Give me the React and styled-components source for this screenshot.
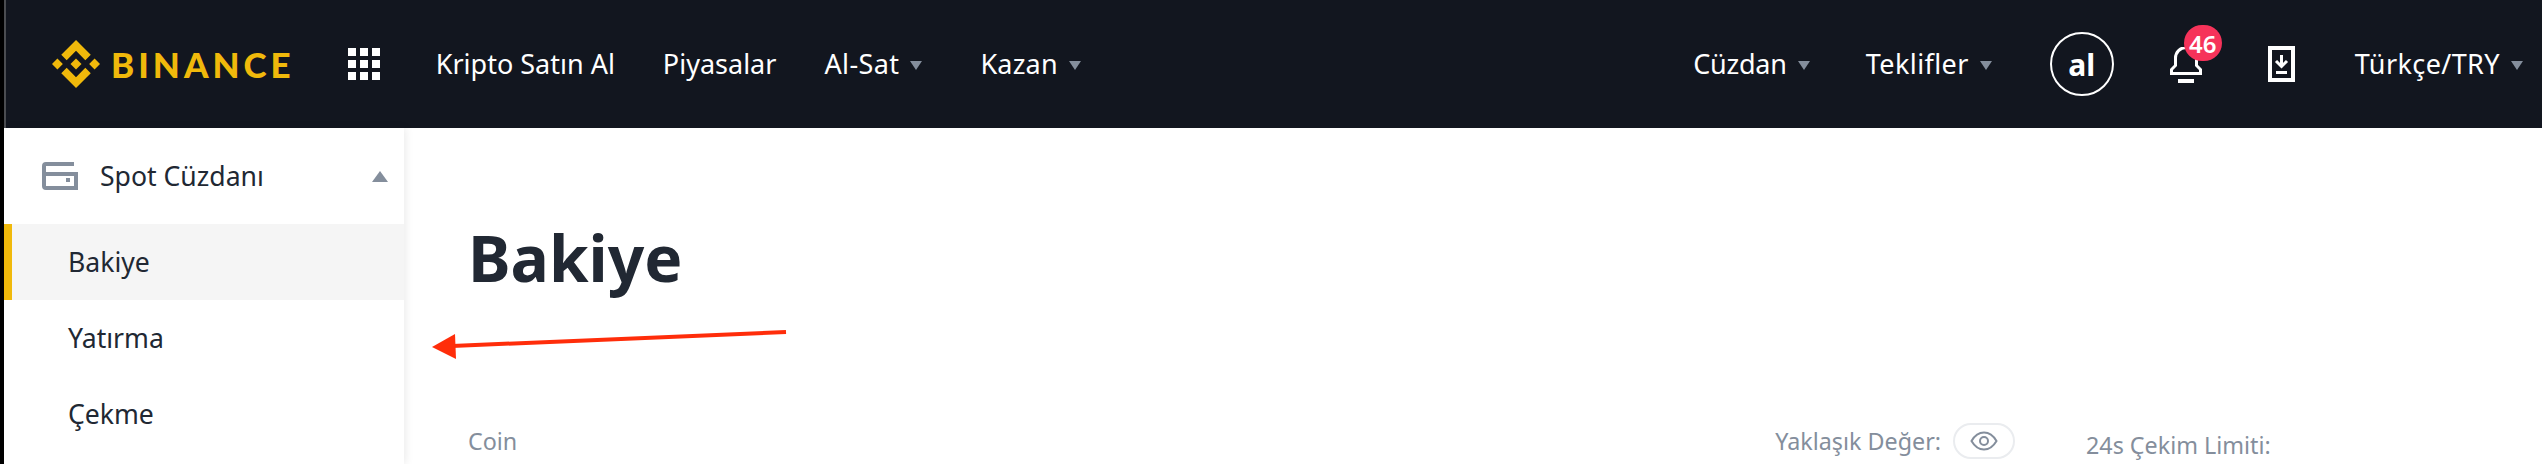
import React from "react";
import styled, { createGlobalStyle } from "styled-components";

const Global = createGlobalStyle`
  html, body {
    margin: 0;
    padding: 0;
    background: #fff;
    overflow: hidden;
  }
  body {
    font-family: "Noto Sans", "Liberation Sans", sans-serif;
  }
`;

const Page = styled.div`
  position: relative;
  width: 2542px;
  height: 464px;
  overflow: hidden;
  display: flex;
  flex-direction: column;
  background: #fff;
  border-left: 4px solid #000;
  box-sizing: border-box;
`;

const Header = styled.header`
  height: 128px;
  flex-shrink: 0;
  box-sizing: border-box;
  display: flex;
  align-items: center;
  justify-content: space-between;
  background: #12161f;
  border-left: 2px solid #4a4c50;
  padding: 0 19px 0 46px;
`;

const HeaderGroup = styled.div`
  display: flex;
  align-items: center;
`;

const Logo = styled.div`
  display: flex;
  align-items: center;
  gap: 11px;
  color: #f0b90b;
  font-family: Lato, sans-serif;
  font-weight: 900;
  font-size: 35px;
  letter-spacing: 4px;
`;

const AppsGrid = styled.div`
  display: grid;
  grid-template-columns: repeat(3, 8px);
  grid-auto-rows: 8px;
  gap: 4px;
  margin-left: 53px;
  i {
    background: #fff;
  }
`;

const NavItem = styled.div`
  display: flex;
  align-items: center;
  gap: 11px;
  color: #fff;
  font-size: 27px;
  line-height: 32px;
  white-space: nowrap;
  margin-left: ${(p) => p.$gap}px;
  letter-spacing: ${(p) => p.$track || 0}px;
`;

const Caret = styled.span`
  width: 0;
  height: 0;
  border-left: 6px solid transparent;
  border-right: 6px solid transparent;
  border-top: 9px solid #848e9c;
  margin-top: 2px;
`;

const Avatar = styled.div`
  width: 64px;
  height: 64px;
  box-sizing: border-box;
  border: 2px solid #fff;
  border-radius: 50%;
  color: #fff;
  font-size: 30px;
  font-weight: 700;
  display: flex;
  align-items: center;
  justify-content: center;
  margin-left: 58px;
`;

const BellWrap = styled.div`
  position: relative;
  width: 32px;
  height: 36px;
  margin-left: 56px;
  margin-top: 2px;
`;

const Badge = styled.span`
  position: absolute;
  left: 14px;
  top: -22px;
  width: 38px;
  height: 36px;
  border-radius: 18px;
  background: #f6335a;
  color: #fff;
  font-size: 24px;
  font-weight: 600;
  display: flex;
  align-items: center;
  justify-content: center;
`;

const DownloadIcon = styled.svg`
  width: 27px;
  height: 36px;
  margin-left: 66px;
`;

const Body = styled.div`
  flex: 1;
  display: flex;
  min-height: 0;
`;

const Sidebar = styled.aside`
  width: 400px;
  flex-shrink: 0;
  background: #fff;
  box-shadow: 2px 0 8px rgba(0, 0, 0, 0.08);
`;

const SideHead = styled.div`
  height: 96px;
  box-sizing: border-box;
  display: flex;
  align-items: center;
  padding: 0 16px 0 38px;
  color: #212833;
  font-size: 26.6px;
`;

const HeadLabel = styled.span`
  margin-left: 22px;
  flex: 1;
`;

const CaretUp = styled.span`
  width: 0;
  height: 0;
  border-left: 8px solid transparent;
  border-right: 8px solid transparent;
  border-bottom: 11px solid #848e9c;
`;

const SideItem = styled.div`
  height: 76px;
  box-sizing: border-box;
  display: flex;
  align-items: center;
  padding-left: ${(p) => (p.$active ? 56 : 64)}px;
  font-size: 26.6px;
  color: #212833;
  background: ${(p) => (p.$active ? "#f5f5f5" : "#fff")};
  border-left: ${(p) => (p.$active ? "8px solid #f0b90b" : "0")};
`;

const Main = styled.main`
  flex: 1;
  min-width: 0;
  padding-left: 64px;
`;

const Title = styled.h1`
  margin: 0;
  padding-top: 85px;
  font-size: 64px;
  line-height: 90px;
  font-weight: 700;
  color: #212833;
`;

const StatRow = styled.div`
  display: flex;
  align-items: center;
  margin-top: 118px;
  font-size: 23.3px;
  color: #848e9c;
`;

const CoinLabel = styled.span`
  flex: 1;
`;

const ValueLabel = styled.div`
  display: flex;
  align-items: center;
  gap: 12px;
`;

const EyePill = styled.div`
  width: 62px;
  height: 36px;
  box-sizing: border-box;
  border: 2px solid #eaecef;
  border-radius: 18px;
  display: flex;
  align-items: center;
  justify-content: center;
`;

const LimitLabel = styled.span`
  width: 456px;
  margin-left: 71px;
  margin-top: 8px;
`;

const Annotation = styled.svg`
  position: absolute;
  left: 420px;
  top: 325px;
  width: 370px;
  height: 40px;
`;

const links = [
  { label: "Kripto Satın Al", gap: 56 },
  { label: "Piyasalar", gap: 48 },
  { label: "Al-Sat", gap: 48, caret: true, track: 0.4 },
  { label: "Kazan", gap: 58, caret: true, track: 0.2 },
];

export default function App() {
  return (
    <Page>
      <Global />
      <Header>
        <HeaderGroup>
          <Logo>
            <svg width="48" height="48" viewBox="0 0 126.61 126.61" fill="#f0b90b">
              <path d="M38.73 53.2l24.59-24.58 24.6 24.6 14.3-14.31L63.32 0 24.43 38.9zM0 63.31l14.3-14.31 14.31 14.31-14.31 14.3zM38.73 73.41l24.59 24.59 24.6-24.6 14.31 14.29-38.9 38.91-38.91-38.88zM98 63.31l14.3-14.31 14.31 14.3-14.31 14.32z" />
              <path d="M77.83 63.3L63.32 48.78 48.81 63.28l14.51 14.5z" />
            </svg>
            BINANCE
          </Logo>
          <AppsGrid>
            {Array.from({ length: 9 }, (_, i) => (
              <i key={i} />
            ))}
          </AppsGrid>
          {links.map((l) => (
            <NavItem key={l.label} $gap={l.gap} $track={l.track}>
              {l.label}
              {l.caret && <Caret />}
            </NavItem>
          ))}
        </HeaderGroup>
        <HeaderGroup>
          <NavItem $gap={0} $track={-0.2}>
            Cüzdan
            <Caret />
          </NavItem>
          <NavItem $gap={56} $track={0.4}>
            Teklifler
            <Caret />
          </NavItem>
          <Avatar>al</Avatar>
          <BellWrap>
            <svg width="32" height="36" viewBox="0 0 32 36" fill="none" stroke="#fff" strokeWidth="3">
              <path d="M1.5 26.5v-4l4-4V11a10.5 10.5 0 0 1 21 0v7.5l4 4v4z" />
              <path d="M8 34h16" strokeWidth="4" />
            </svg>
            <Badge>46</Badge>
          </BellWrap>
          <DownloadIcon viewBox="0 0 27 36" fill="none" stroke="#fff">
            <rect x="2" y="2" width="23" height="32" strokeWidth="4" />
            <path d="M13.5 9v11" strokeWidth="3" />
            <path d="M8 15l5.5 5.5L19 15" strokeWidth="3" />
            <path d="M8 26.5h11" strokeWidth="3" />
          </DownloadIcon>
          <NavItem $gap={60} $track={0.4}>
            Türkçe/TRY
            <Caret />
          </NavItem>
        </HeaderGroup>
      </Header>
      <Body>
        <Sidebar>
          <SideHead>
            <svg width="36" height="28" viewBox="0 0 36 28" fill="none" stroke="#848e9c" strokeWidth="4">
              <path d="M32 2H4Q2 2 2 4v20q0 2 2 2h30V12H2" />
              <path d="M26 18h0" strokeWidth="4" strokeLinecap="square" />
            </svg>
            <HeadLabel>Spot Cüzdanı</HeadLabel>
            <CaretUp />
          </SideHead>
          <SideItem $active>Bakiye</SideItem>
          <SideItem>Yatırma</SideItem>
          <SideItem>Çekme</SideItem>
        </Sidebar>
        <Main>
          <Title>Bakiye</Title>
          <StatRow>
            <CoinLabel>Coin</CoinLabel>
            <ValueLabel>
              Yaklaşık Değer:
              <EyePill>
                <svg width="28" height="20" viewBox="0 0 28 20" fill="none" stroke="#848e9c" strokeWidth="2">
                  <path d="M1.5 10C5 4 9 1.5 14 1.5S23 4 26.5 10C23 16 19 18.5 14 18.5S5 16 1.5 10z" />
                  <circle cx="14" cy="10" r="4" />
                </svg>
              </EyePill>
            </ValueLabel>
            <LimitLabel>24s Çekim Limiti:</LimitLabel>
          </StatRow>
        </Main>
      </Body>
      <Annotation viewBox="0 0 370 40">
        <path d="M362 7L28 21" stroke="#ff2d0a" strokeWidth="4" fill="none" />
        <path d="M8 22L31 9l1 25z" fill="#ff2d0a" />
      </Annotation>
    </Page>
  );
}
